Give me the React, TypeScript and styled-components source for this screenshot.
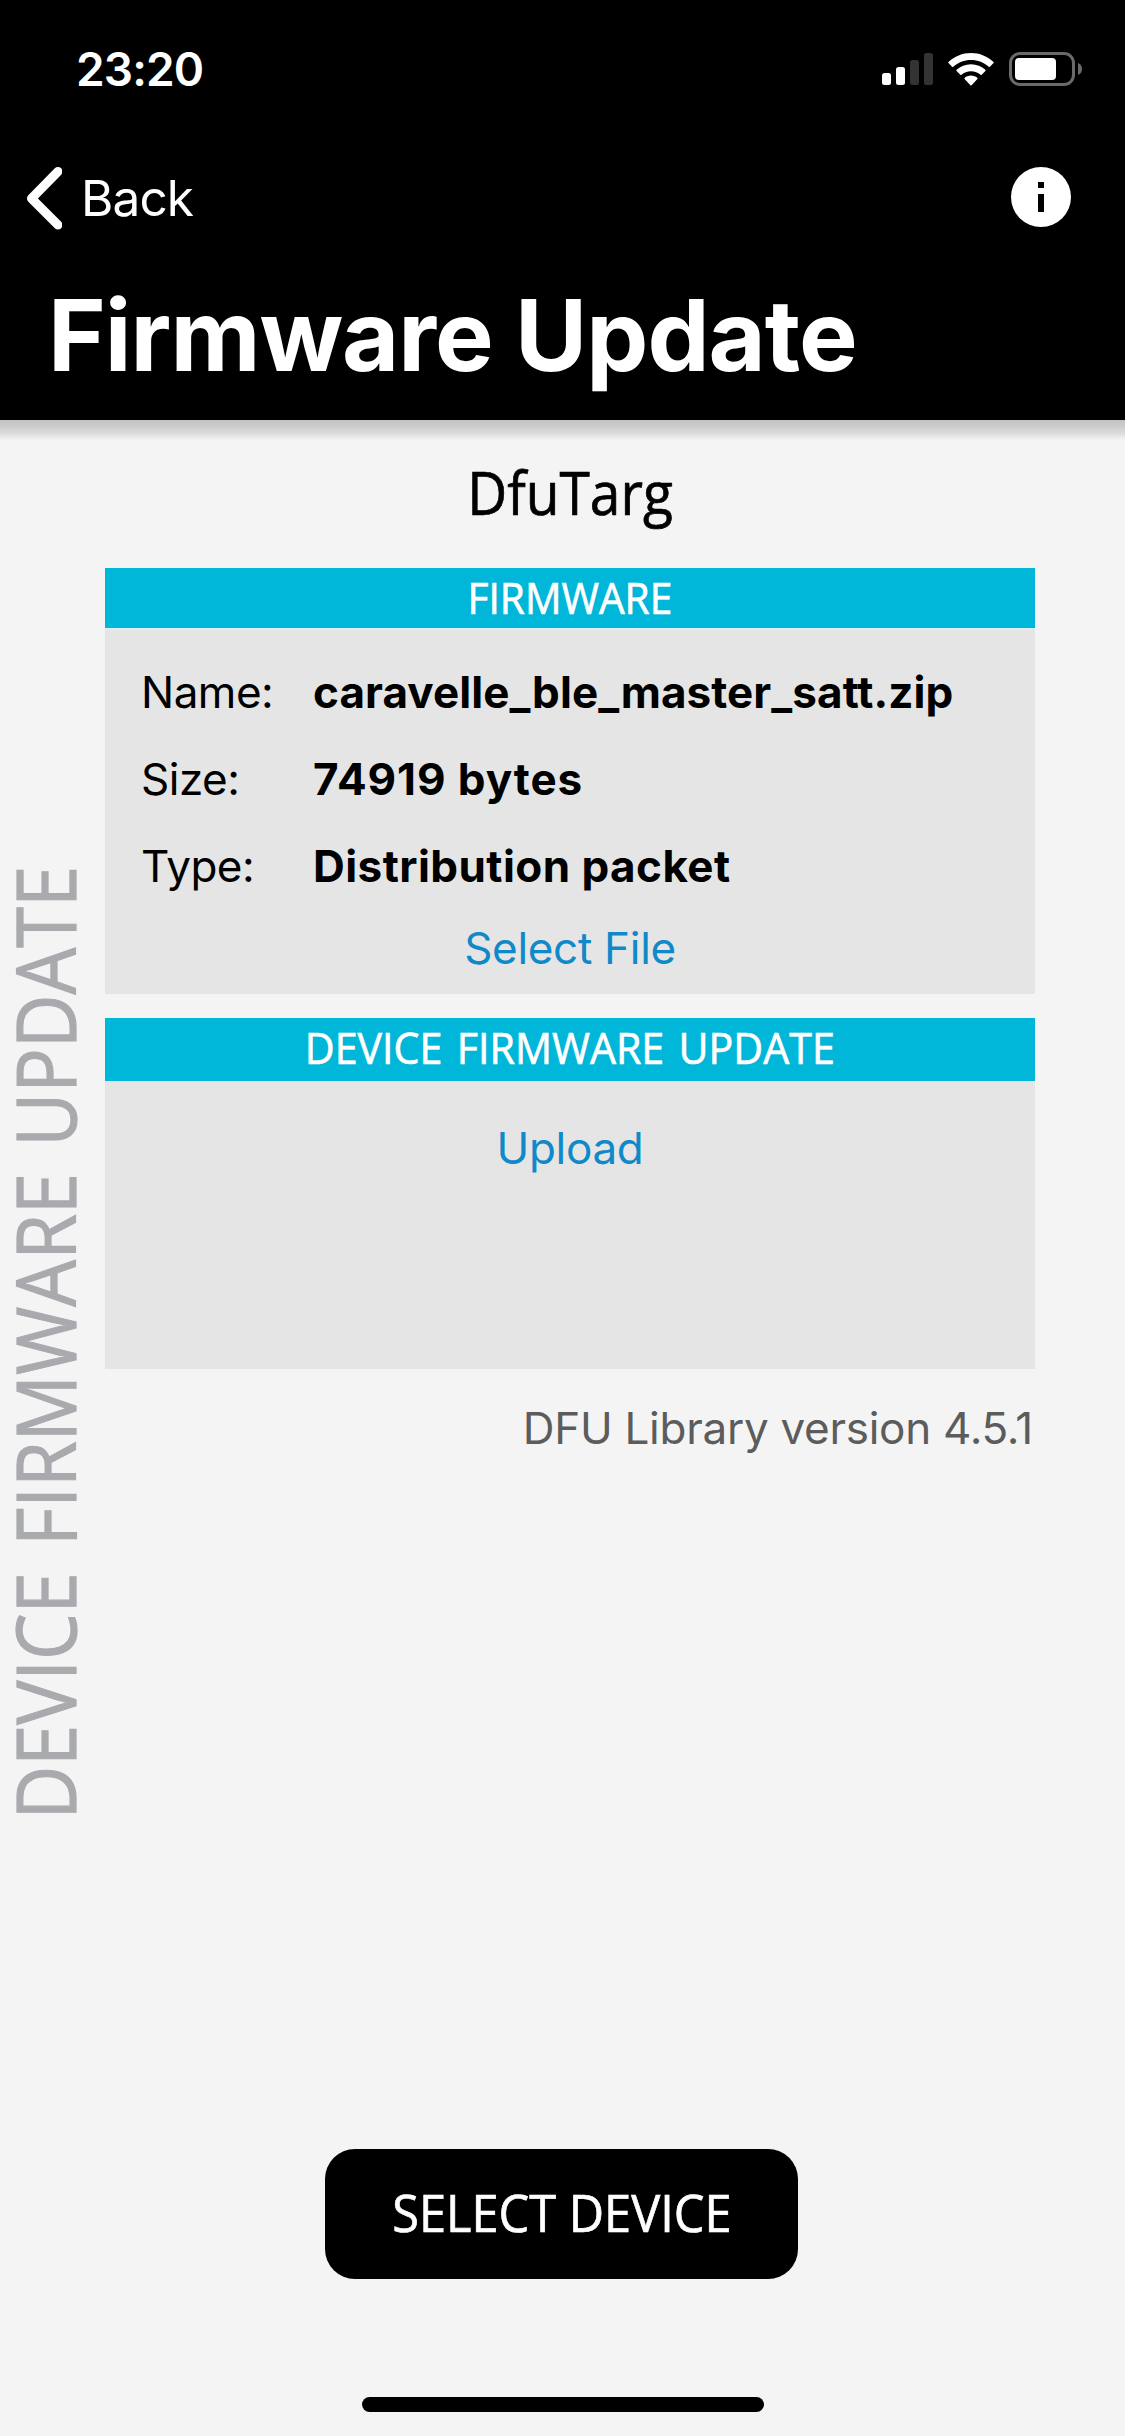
import React from 'react';
import styled, { createGlobalStyle } from 'styled-components';

const ui = `Inter, "Liberation Sans", sans-serif`;
const humanist = `"Open Sans", "Noto Sans", sans-serif`;

const GlobalStyle = createGlobalStyle`
  * { box-sizing: border-box; }
  body { margin: 0; background: #f4f4f4; }
`;

const Screen = styled.div`
  width: 1125px;
  height: 2436px;
  display: flex;
  flex-direction: column;
  overflow: hidden;
  background: #f4f4f4;
  color: #000;
  font-family: ${ui};
  white-space: nowrap;
`;

const Header = styled.header`
  height: 420px;
  flex: none;
  background: #000;
  color: #fff;
`;

const StatusBar = styled.div`
  height: 138px;
  display: flex;
  align-items: center;
  justify-content: space-between;
  padding: 0 43px 0 76px;
`;

const Clock = styled.span`
  font-size: 46px;
  font-weight: 600;
  letter-spacing: -0.9px;
`;

const StatusIcons = styled.div`
  display: flex;
  align-items: center;
  gap: 15px;

  svg { display: block; }
`;

const NavBar = styled.nav`
  height: 120px;
  display: flex;
  align-items: center;
  justify-content: space-between;
  padding: 0 54px 0 26px;
`;

const BackButton = styled.button`
  display: flex;
  align-items: center;
  gap: 19px;
  padding: 0;
  border: 0;
  background: none;
  color: #fff;
  font: 400 49.5px ${ui};
  letter-spacing: -0.9px;
`;

const InfoButton = styled.button`
  display: flex;
  padding: 0;
  margin-bottom: 2px;
  border: 0;
  background: none;
`;

const PageTitle = styled.h1`
  margin: 0;
  padding-left: 48px;
  font-size: 98.6px;
  font-weight: 700;
  line-height: 155px;
  letter-spacing: -1px;
`;

const HeaderShadow = styled.div`
  height: 20px;
  flex: none;
  background: linear-gradient(#c3c3c3, #cbcbcb 30%, #dedede 70%, #f4f4f4);
`;

const Main = styled.main`
  height: 1709px;
  flex: none;
  display: grid;
  grid-template-columns: 105px 930px;
`;

const Sidebar = styled.aside`
  display: flex;
  align-items: center;
  justify-content: center;
  width: 88px;
  padding-top: 96px;
`;

const SidebarLabel = styled.span`
  writing-mode: vertical-rl;
  transform: rotate(180deg) scaleY(0.9);
  font-family: ${humanist};
  font-size: 82.2px;
  line-height: 88px;
  word-spacing: 8px;
  color: #a9aaad;
  -webkit-text-stroke: 1.2px #a9aaad;
`;

const Content = styled.section`
  display: flex;
  flex-direction: column;
`;

const Condensed = styled.span<{ $x: number; $gap?: number }>`
  display: inline-block;
  font-family: ${humanist};
  transform: scaleX(${(p) => p.$x});
  word-spacing: ${(p) => p.$gap ?? 0}px;
  -webkit-text-stroke: 0.7px currentColor;
`;

const DeviceName = styled.h2`
  margin: 0 0 23px;
  font-size: 60px;
  font-weight: 400;
  line-height: 104px;
  text-align: center;
`;

const Panel = styled.section`
  background: #e5e5e5;

  & + & { margin-top: 24px; }
`;

const PanelHeading = styled.h3<{ $height: number }>`
  height: ${(p) => p.$height}px;
  margin: 0;
  background: #00b6d9;
  color: #fff;
  font-size: 44.4px;
  font-weight: 400;
  line-height: 59px;
  text-align: center;
`;

const FirmwareBody = styled.div`
  height: 366px;
  padding-top: 19px;
  border-top: 2px solid #d6f0f4;
`;

const UploadBody = styled.div`
  height: 288px;
  padding-top: 29px;
`;

const Field = styled.div`
  display: grid;
  grid-template-columns: 172px 1fr;
  padding-left: 36px;
  font-size: 44px;
  line-height: 87px;
`;

const FieldLabel = styled.span`
  letter-spacing: -0.5px;
`;

const FieldValue = styled.span<{ $tracking: number }>`
  font-weight: 700;
  letter-spacing: ${(p) => p.$tracking}px;
`;

const LinkButton = styled.button`
  display: block;
  width: 100%;
  height: 76px;
  padding: 0;
  border: 0;
  background: none;
  color: #1089c8;
  font: 400 44px ${ui};
  letter-spacing: -0.3px;
`;

const Version = styled.p`
  margin: 0;
  padding-right: 2px;
  color: #5c5c5c;
  font-size: 44px;
  line-height: 118px;
  letter-spacing: -0.27px;
  text-align: right;
`;

const Footer = styled.footer`
  flex: 1;
  display: flex;
  flex-direction: column;
  align-items: center;
  justify-content: space-between;
  padding-bottom: 24px;
`;

const SelectDeviceButton = styled.button`
  width: 473px;
  height: 130px;
  margin-right: 2px;
  padding: 0 0 4px;
  border: 0;
  border-radius: 30px;
  background: #000;
  color: #fff;
  font-size: 51.4px;
`;

const HomeIndicator = styled.div`
  width: 402px;
  height: 15px;
  border-radius: 8px;
  background: #000;
`;

const SignalIcon = () => (
  <svg width="51" height="32" viewBox="0 0 51 32">
    <rect x="0" y="20" width="9" height="12" rx="2.5" fill="#fff" />
    <rect x="14" y="14" width="9" height="18" rx="2.5" fill="#fff" />
    <rect x="28" y="7" width="9" height="25" rx="2.5" fill="#333" />
    <rect x="42" y="0" width="9" height="32" rx="2.5" fill="#333" />
  </svg>
);

const WifiIcon = () => (
  <svg width="46" height="33" viewBox="0 0 46 33" fill="#fff">
    <path d="M23 0C14.300 0 6.400 3.400.5 8.900q-.6.600 0 1.200l3.600 3.700q.6.600 1.200 0C10 9.500 16.200 6.900 23 6.900S36 9.500 40.700 13.800q.6.600 1.200 0l3.600-3.700q.6-.6 0-1.200C39.600 3.400 31.700 0 23 0Z" />
    <path d="M23 11.300c-5.500 0-10.600 2.100-14.400 5.500q-.6.600 0 1.200l3.700 3.800q.6.500 1.200 0c2.500-2.200 5.800-3.600 9.500-3.600s7 1.400 9.500 3.600q.6.500 1.200 0l3.700-3.800q.6-.6 0-1.200c-3.800-3.400-8.900-5.500-14.400-5.500Z" />
    <path d="M23 22.600c-2.500 0-4.700.9-6.400 2.300q-.6.600 0 1.200l5.800 6.200q.6.600 1.200 0l5.800-6.200q.6-.6 0-1.200c-1.700-1.400-3.900-2.300-6.400-2.300Z" />
  </svg>
);

const BatteryIcon = () => (
  <svg width="73" height="34" viewBox="0 0 73 34">
    <rect x="1.500" y="1.500" width="63" height="31" rx="9.500" fill="none" stroke="#6a6a6a" strokeWidth="3" />
    <rect x="6" y="6" width="41" height="22" rx="4" fill="#fff" />
    <path d="M69 11c2.600 1 4 3.300 4 6s-1.400 5-4 6Z" fill="#6a6a6a" />
  </svg>
);

const ChevronIcon = () => (
  <svg width="36" height="64" viewBox="0 0 36 64" fill="none" stroke="#fff" strokeWidth="9" strokeLinecap="round" strokeLinejoin="round">
    <path d="M32 5.500 5.500 32.500l26.500 26.500" />
  </svg>
);

const InfoIcon = () => (
  <svg width="60" height="60" viewBox="0 0 60 60">
    <circle cx="30" cy="30" r="30" fill="#fff" />
    <path d="M27 15h6v6h-6zM27 27h6v18h-6z" fill="#000" />
  </svg>
);

const fields = [
  { label: 'Name:', value: 'caravelle_ble_master_satt.zip', tracking: 0.08 },
  { label: 'Size:', value: '74919 bytes', tracking: 0.91 },
  { label: 'Type:', value: 'Distribution packet', tracking: 0.45 },
];

export default function App() {
  return (
    <Screen>
      <GlobalStyle />
      <Header>
        <StatusBar>
          <Clock>23:20</Clock>
          <StatusIcons>
            <SignalIcon />
            <WifiIcon />
            <BatteryIcon />
          </StatusIcons>
        </StatusBar>
        <NavBar>
          <BackButton>
            <ChevronIcon />
            Back
          </BackButton>
          <InfoButton aria-label="Info">
            <InfoIcon />
          </InfoButton>
        </NavBar>
        <PageTitle>Firmware Update</PageTitle>
      </Header>
      <HeaderShadow />
      <Main>
        <Sidebar>
          <SidebarLabel>DEVICE FIRMWARE UPDATE</SidebarLabel>
        </Sidebar>
        <Content>
          <DeviceName>
            <Condensed $x={0.918}>DfuTarg</Condensed>
          </DeviceName>
          <Panel>
            <PanelHeading $height={60}>
              <Condensed $x={0.915}>FIRMWARE</Condensed>
            </PanelHeading>
            <FirmwareBody>
              {fields.map((f) => (
                <Field key={f.label}>
                  <FieldLabel>{f.label}</FieldLabel>
                  <FieldValue $tracking={f.tracking}>{f.value}</FieldValue>
                </Field>
              ))}
              <LinkButton>Select File</LinkButton>
            </FirmwareBody>
          </Panel>
          <Panel>
            <PanelHeading $height={63}>
              <Condensed $x={0.927} $gap={4}>DEVICE FIRMWARE UPDATE</Condensed>
            </PanelHeading>
            <UploadBody>
              <LinkButton>Upload</LinkButton>
            </UploadBody>
          </Panel>
          <Version>DFU Library version 4.5.1</Version>
        </Content>
      </Main>
      <Footer>
        <SelectDeviceButton>
          <Condensed $x={0.948}>SELECT DEVICE</Condensed>
        </SelectDeviceButton>
        <HomeIndicator />
      </Footer>
    </Screen>
  );
}
